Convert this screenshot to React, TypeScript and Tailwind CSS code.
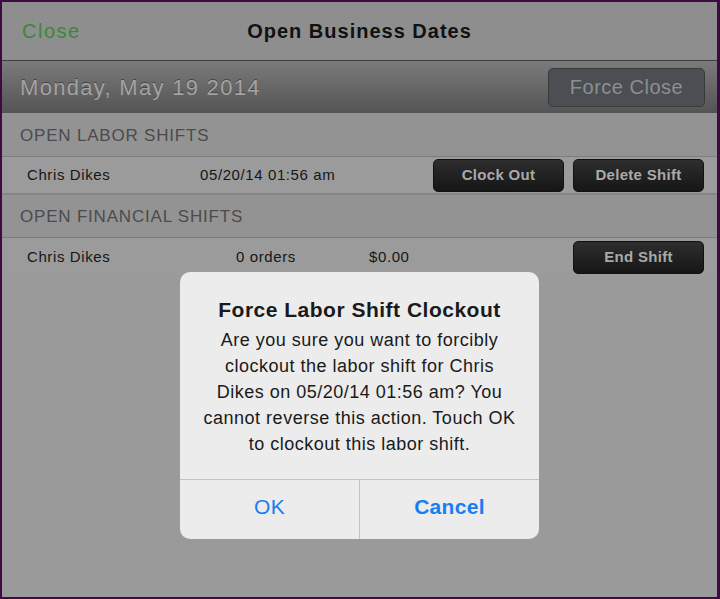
import React from 'react';

const font = { fontFamily: '"Liberation Sans", Arial, sans-serif' };

function DarkButton({ label, className = '' }: { label: string; className?: string }) {
  return (
    <button
      className={`h-[33px] rounded-[5px] bg-gradient-to-b from-[#2e2e2e] to-[#161616] border border-[#111] text-[15px] font-bold tracking-[0.3px] text-[#a9a9a9] ${className}`}
    >
      {label}
    </button>
  );
}

function App() {
  return (
    <div
      style={font}
      className="relative w-[720px] h-[599px] overflow-hidden bg-[#9a9a9a] border-l-2 border-t-2 border-r-[3px] border-b-2 border-[#3c0b40]"
    >
      {/* top nav */}
      <div className="relative flex items-center h-[59px] bg-[#8e8e8e] border-b border-[#3f3f3f]">
        <span className="ml-5 text-[20px] tracking-[1.5px] text-[#3a8834]">Close</span>
        <span className="absolute left-0 right-0 text-center text-[20px] font-bold tracking-[1px] text-[#111] pointer-events-none">
          Open Business Dates
        </span>
      </div>

      {/* date bar */}
      <div className="flex items-center justify-between h-[52px] pl-[18px] pr-[12px] bg-gradient-to-b from-[#7b7b7b] to-[#545454]">
        <span className="text-[22px] tracking-[1.3px] text-[#a3a3a3] [text-shadow:0_-1px_0_#444]">Monday, May 19 2014</span>
        <button className="w-[157px] h-[39px] rounded-[5px] bg-[#4b4e53] border border-[#38393c] text-[20px] tracking-[0.5px] text-[#8c8e92]">
          Force Close
        </button>
      </div>

      {/* labor shifts */}
      <div className="flex items-center h-[44px] pl-[18px] pt-[2px] bg-[#939393] border-b border-[#7d7d7d] text-[17px] tracking-[0.8px] text-[#4b4b4b]">
        OPEN LABOR SHIFTS
      </div>
      <div className="flex items-center h-[38px] bg-[#9b9b9b] border-b-2 border-[#858585] text-[15px] tracking-[0.6px] text-[#161616]">
        <span className="ml-[25px] w-[173px]">Chris Dikes</span>
        <span className="flex-1">05/20/14 01:56 am</span>
        <DarkButton label="Clock Out" className="w-[131px]" />
        <DarkButton label="Delete Shift" className="w-[131px] ml-[9px] mr-[13px]" />
      </div>

      {/* financial shifts */}
      <div className="flex items-center h-[43px] pl-[18px] pt-[2px] bg-[#939393] border-b border-[#7d7d7d] text-[17px] tracking-[0.8px] text-[#4b4b4b]">
        OPEN FINANCIAL SHIFTS
      </div>
      <div className="flex items-center h-[38px] bg-[#9b9b9b] text-[15px] tracking-[0.6px] text-[#161616]">
        <span className="ml-[25px] w-[209px]">Chris Dikes</span>
        <span className="w-[133px]">0 orders</span>
        <span className="flex-1">$0.00</span>
        <DarkButton label="End Shift" className="w-[131px] mr-[13px]" />
      </div>

      {/* alert */}
      <div className="absolute left-[178px] top-[270px] w-[359px] rounded-[10px] bg-[#ececec] overflow-hidden">
        <div className="px-2 pt-[25px] pb-[22px] text-center text-[#1a1a1a] whitespace-nowrap">
          <div className="text-[21px] font-bold tracking-[0.5px] leading-[26px]">Force Labor Shift Clockout</div>
          <div className="mt-[4px] text-[18px] tracking-[0.5px] leading-[26px]">
            Are you sure you want to forcibly
            <br />
            clockout the labor shift for Chris
            <br />
            Dikes on 05/20/14 01:56 am? You
            <br />
            cannot reverse this action. Touch OK
            <br />
            to clockout this labor shift.
          </div>
        </div>
        <div className="flex h-[60px] pb-[5px] border-t border-[#c2c2c2] text-[21px] tracking-[0.3px] text-[#1a7cf4]">
          <div className="flex-1 flex items-center justify-center border-r border-[#c2c2c2] -mb-[5px] pb-[5px]">OK</div>
          <div className="flex-1 flex items-center justify-center font-bold">Cancel</div>
        </div>
      </div>
    </div>
  );
}

export default App;
